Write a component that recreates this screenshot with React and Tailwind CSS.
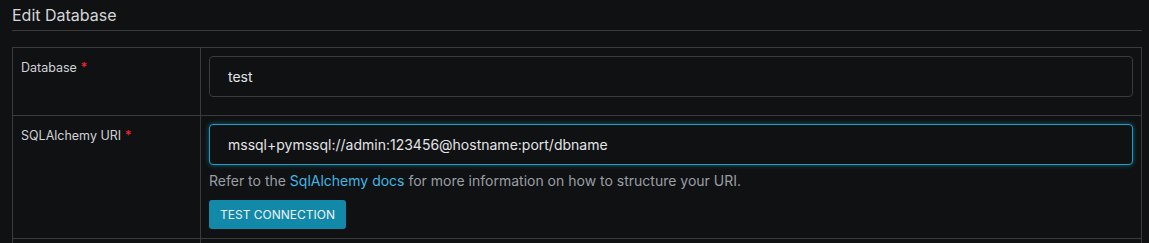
export default function App() {
  const font = { fontFamily: 'Inter, "Noto Sans", sans-serif' };
  return (
    <div className="min-h-[243px] bg-[#101113] pl-[12px] pr-[7px]" style={font}>
      <div className="border-b border-[#3a3b3d] pt-[6px] pb-[5px] text-[16px] leading-[19px] text-[#d4d6d9]">
        Edit Database
      </div>
      <div className="mt-[16px] border border-[#3a3b3d]">
        <div className="flex border-b border-[#3a3b3d]">
          <div className="w-[188px] shrink-0 border-r border-[#3a3b3d] px-[8px] pt-[12px] text-[12.5px] leading-[16px] text-[#cfd2d6]">
            Database <span className="font-bold text-[#e0252b]">*</span>
          </div>
          <div className="flex-1 px-[8px] pt-[8px] pb-[18px]">
            <div className="flex h-[41px] items-center rounded-[4px] border border-[#3a3b3d] bg-[#101113] pl-[18px] text-[14px] text-[#e2e4e7]">
              test
            </div>
          </div>
        </div>
        <div className="flex border-b border-[#3a3b3d]">
          <div className="w-[188px] shrink-0 border-r border-[#3a3b3d] px-[8px] pt-[12px] text-[12.5px] leading-[16px] text-[#cfd2d6]">
            SQLAlchemy URI <span className="font-bold text-[#e0252b]">*</span>
          </div>
          <div className="flex-1 px-[8px] pt-[8px] pb-[9px]">
            <div className="flex h-[41px] items-center rounded-[4px] border border-[#18a0c9] bg-[#101113] pl-[18px] text-[14px] text-[#e2e4e7] shadow-[0_0_5px_rgba(24,160,201,0.55)]">
              mssql+pymssql://admin:123456@hostname:port/dbname
            </div>
            <div className="mt-[7px] text-[14px] leading-[17px] text-[#9a9ea4]">
              Refer to the <span className="text-[#3db8e6]">SqlAlchemy docs</span> for more information on how to structure your URI.
            </div>
            <button className="mt-[11px] h-[29px] rounded-[3px] bg-[#1289a9] px-[11px] text-[12px] text-[#eef2f4]">
              TEST CONNECTION
            </button>
          </div>
        </div>
        <div className="flex h-[40px]">
          <div className="w-[188px] shrink-0 border-r border-[#3a3b3d]"></div>
          <div className="flex-1"></div>
        </div>
      </div>
    </div>
  );
}
